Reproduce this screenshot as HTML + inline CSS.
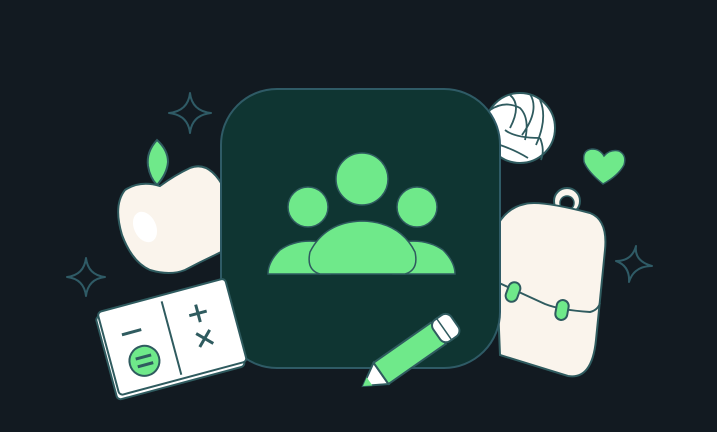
<!DOCTYPE html>
<html><head><style>html,body{margin:0;padding:0;background:#121a21;width:717px;height:432px;overflow:hidden}</style></head>
<body>
<svg width="717" height="432" viewBox="0 0 717 432" xmlns="http://www.w3.org/2000/svg">
<rect width="717" height="432" fill="#121a21"/>
<g fill="none" stroke="#2f5b66" stroke-width="2" stroke-linejoin="round">
<path d="M190 93 Q192 111 211 113 Q192 115 190 133 Q188 115 169 113 Q188 111 190 93Z"/>
<path d="M86 258 Q88 275 105 277 Q88 279 86 296 Q84 279 67 277 Q84 275 86 258Z"/>
<path d="M636 246 Q634 261 652 266 Q634 266 629 282 Q630 266 616 261 Q632 261 636 246Z"/>
</g>
<!-- apple -->
<path d="M157 140 Q146 152 148 166 Q150 178 157 185 Q167 174 168 162 Q168 150 157 140Z" fill="#6fe98a" stroke="#2f5b5f" stroke-width="2"/>
<path d="M160 186 Q140 180 125 190 Q113 205 122 235 Q132 262 150 270 Q170 276 185 270 Q200 262 215 255 L225 250 L225 190 Q210 160 190 168 Q175 175 160 186Z" fill="#faf4ec" stroke="#2f5b5f" stroke-width="2"/>
<ellipse cx="145" cy="227" rx="11" ry="16" transform="rotate(-25 145 227)" fill="#fff"/>
<!-- volleyball -->
<circle cx="520" cy="128" r="35" fill="#fff" stroke="#2f5b5f" stroke-width="2"/>
<g fill="none" stroke="#2f5b5f" stroke-width="1.8">
<path d="M490 110 Q505 100 520 108 Q530 118 525 140"/>
<path d="M510 95 Q522 105 510 128"/><path d="M530 94 Q540 110 522 135"/>
<path d="M540 100 Q548 118 536 145"/><path d="M505 130 Q515 138 540 138"/>
<path d="M500 145 Q515 150 528 158"/><path d="M540 138 Q545 150 541 160"/>
</g>
<!-- heart -->
<path d="M603 184 Q588 172 584 162 Q582 150 592 149 Q600 149 604 156 Q610 149 619 151 Q627 155 624 165 Q618 176 603 184Z" fill="#6fe98a" stroke="#2f5b5f" stroke-width="1.5"/>
<!-- backpack -->
<circle cx="567" cy="201" r="13" fill="#faf4ec" stroke="#2f5b5f" stroke-width="2"/>
<circle cx="567" cy="203" r="7" fill="#121a21" stroke="#2f5b5f" stroke-width="1.5"/>
<path d="M525 204 Q540 200 590 213 Q608 220 605 250 L596 340 Q592 380 568 376 L500 355 L495 230 Q505 208 525 204Z" fill="#faf4ec" stroke="#2f5b5f" stroke-width="2"/>
<path d="M497 282 L545 304 Q560 310 590 312 Q598 310 600 303" fill="none" stroke="#2f5b5f" stroke-width="2"/>
<rect x="507" y="282" width="12" height="20" rx="6" transform="rotate(20 513 292)" fill="#6fe98a" stroke="#2f5b5f" stroke-width="2"/>
<rect x="556" y="300" width="12" height="20" rx="6" transform="rotate(10 562 310)" fill="#6fe98a" stroke="#2f5b5f" stroke-width="2"/>
<!-- main square -->
<rect x="221" y="89" width="279" height="279" rx="56" fill="#0f3532" stroke="#2f5b66" stroke-width="2"/>
<g fill="#6fe98a" stroke="#2f5b5f" stroke-width="1.5">
<circle cx="362" cy="179" r="26"/>
<circle cx="308" cy="207" r="20"/>
<circle cx="417" cy="207" r="20"/>
<path d="M268 274 Q268 262 280 250 Q300 236 330 244 L330 274Z"/>
<path d="M455 274 Q455 262 443 250 Q423 236 393 244 L393 274Z"/>
<path d="M320 274 Q306 270 310 252 Q325 222 362 221 Q400 222 415 252 Q419 270 405 274Z"/>
</g>
<!-- book -->
<g transform="rotate(-15 172 340)">
<rect x="104" y="298" width="132" height="86" rx="4" fill="#fff" stroke="#2f5b5f" stroke-width="2"/>
<rect x="107" y="294" width="132" height="86" rx="4" fill="#fff" stroke="#2f5b5f" stroke-width="2"/>
<line x1="172" y1="300" x2="172" y2="376" stroke="#2f5b5f" stroke-width="2"/>
<line x1="125" y1="322" x2="145" y2="322" stroke="#2f5b5f" stroke-width="3"/>
<circle cx="140" cy="353" r="15" fill="#6fe98a" stroke="#2f5b5f" stroke-width="2"/>
<line x1="132" y1="349" x2="148" y2="349" stroke="#2f5b5f" stroke-width="3"/>
<line x1="132" y1="357" x2="148" y2="357" stroke="#2f5b5f" stroke-width="3"/>
<path d="M204 312 v18 M195 321 h18 M197 340 l14 14 M211 340 l-14 14" stroke="#2f5b5f" stroke-width="3"/>
</g>
<!-- pencil -->
<g transform="translate(363 386) rotate(-35)">
<path d="M0 0 L22 -13 L22 13Z" fill="#fff" stroke="#2f5b5f" stroke-width="2"/>
<path d="M0 0 L8 -5 L8 5Z" fill="#6fe98a"/>
<rect x="22" y="-13" width="70" height="26" fill="#6fe98a" stroke="#2f5b5f" stroke-width="2"/>
<rect x="90" y="-13" width="22" height="26" rx="7" fill="#fff" stroke="#2f5b5f" stroke-width="2"/>
<line x1="99" y1="-13" x2="99" y2="13" stroke="#2f5b5f" stroke-width="1.5"/>
</g>
</svg>
</body></html>
